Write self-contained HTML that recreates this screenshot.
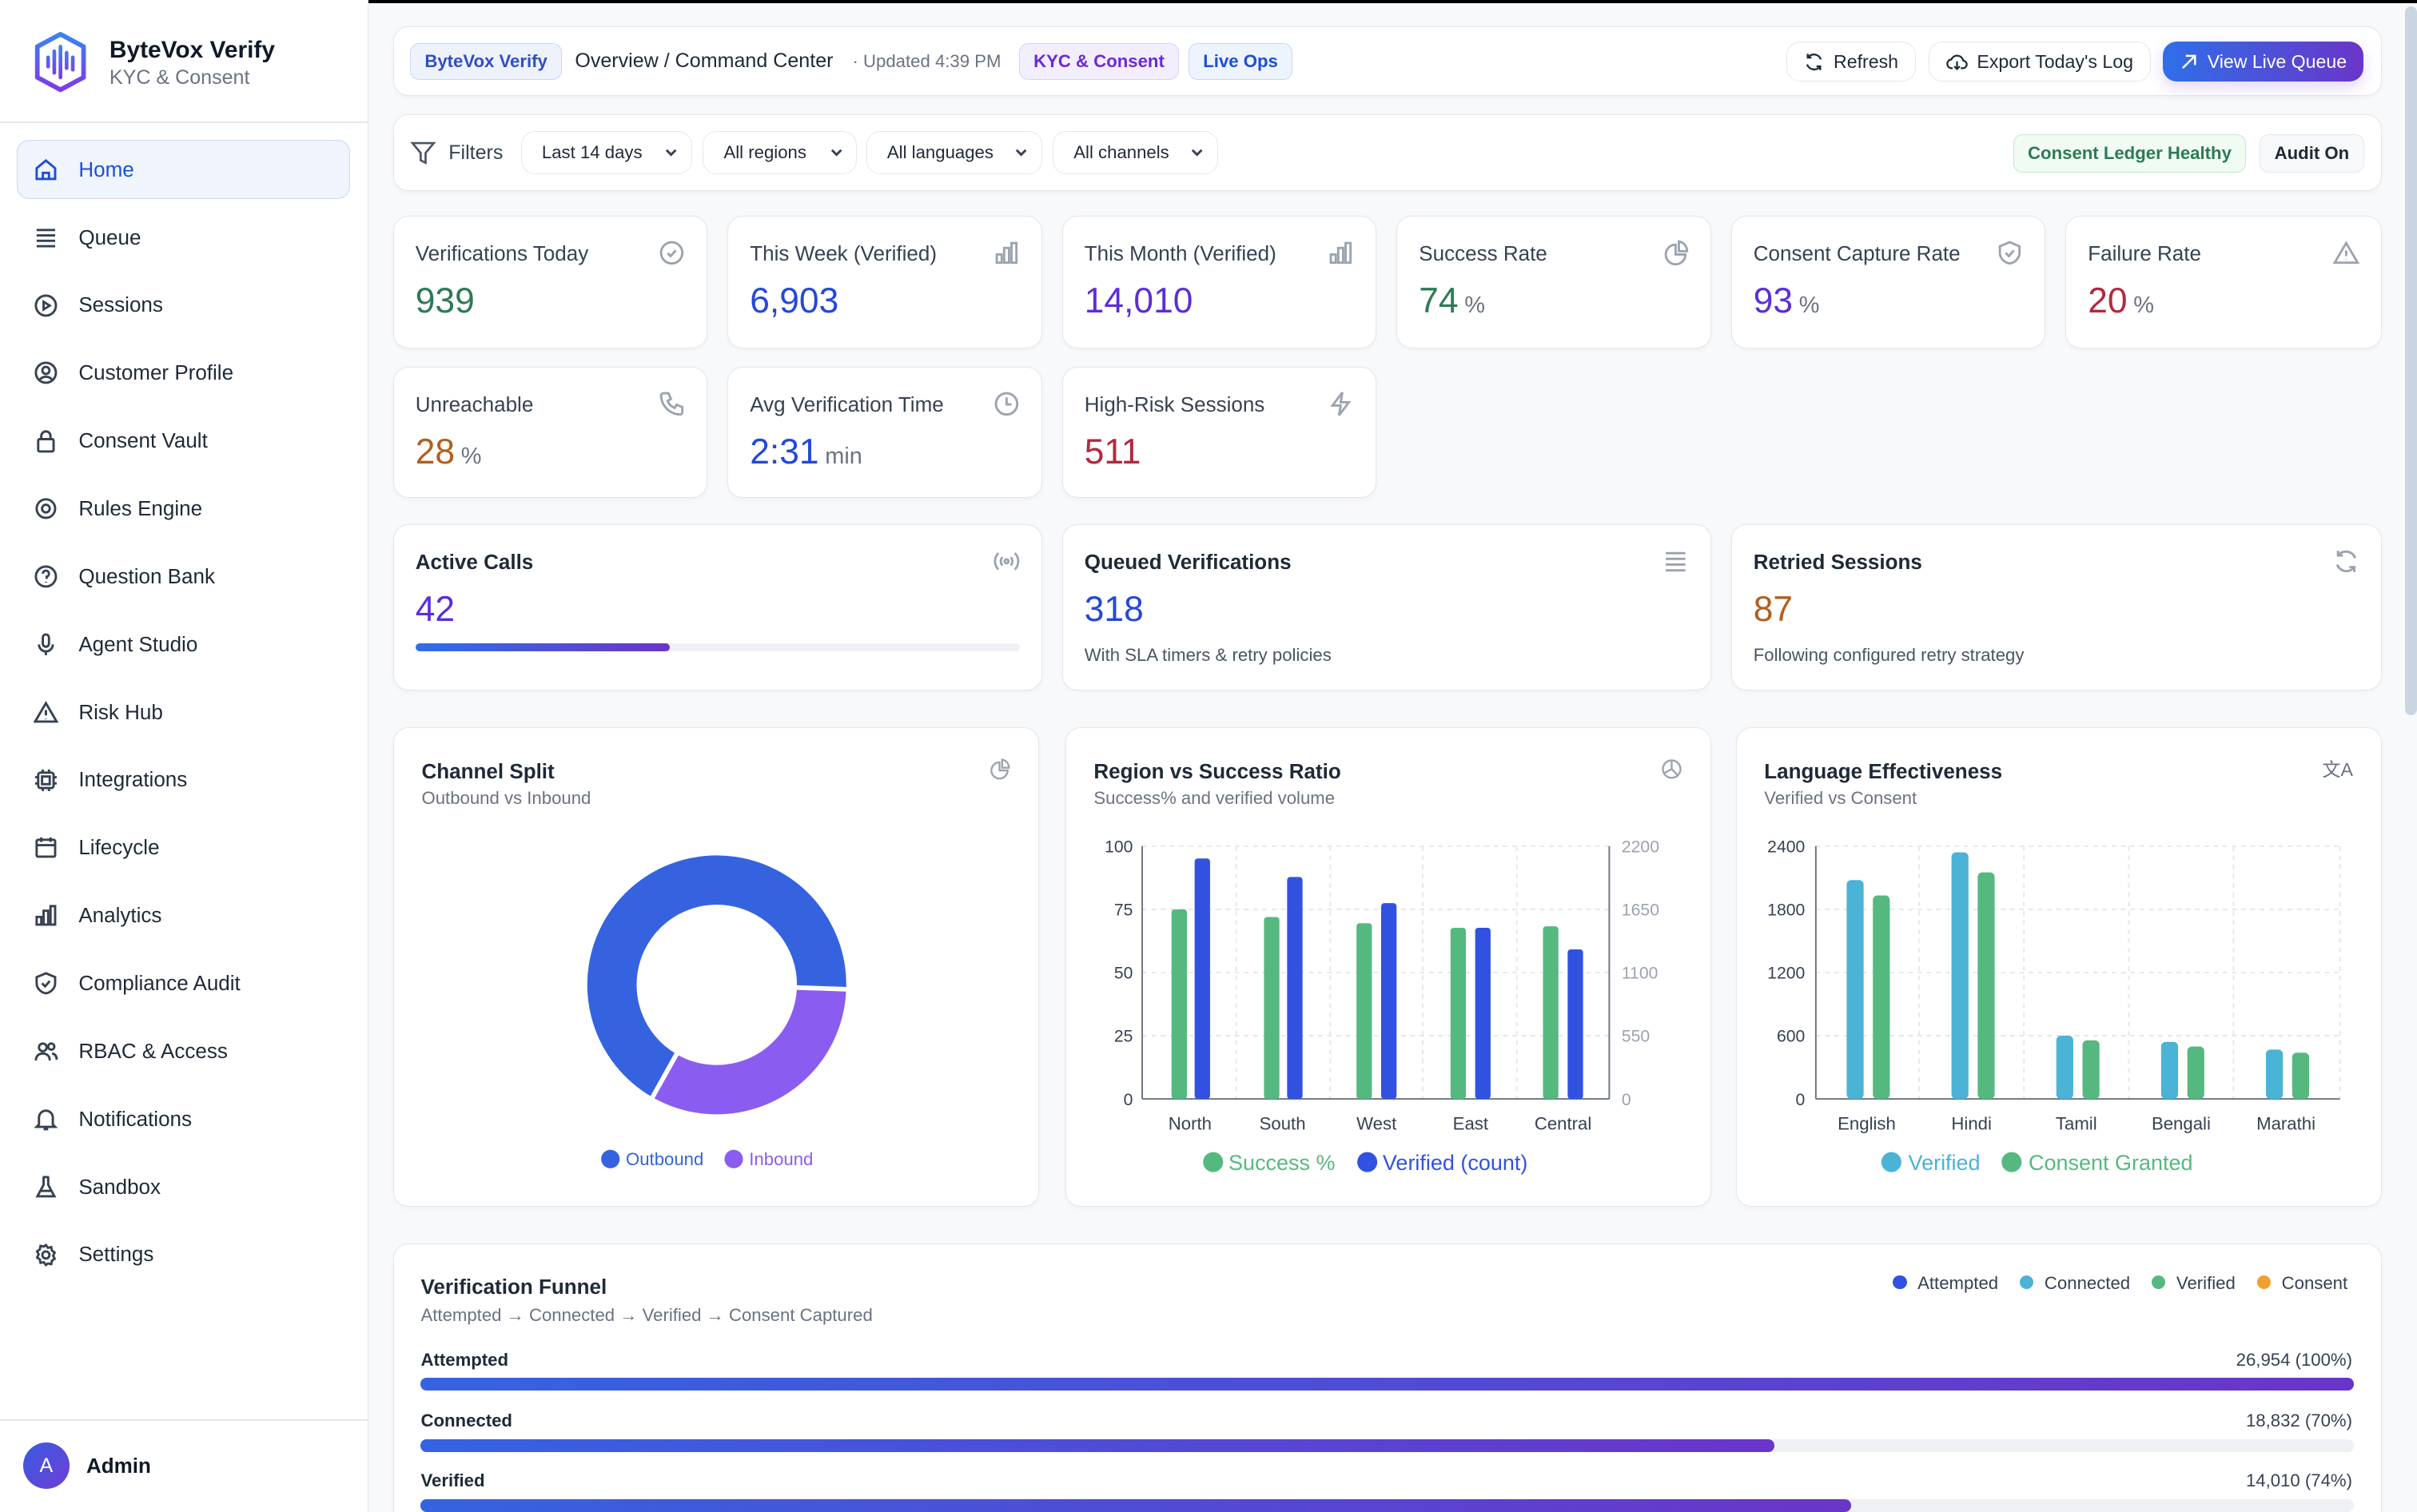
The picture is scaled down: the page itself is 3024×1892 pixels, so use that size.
<!DOCTYPE html>
<html><head><meta charset="utf-8"><style>
*{box-sizing:border-box;margin:0;padding:0}
html,body{width:3024px;height:1892px;overflow:hidden;background:#f8f9fb}
#w{zoom:1.92857;width:1568px;height:981px;position:relative;font-family:"Liberation Sans",sans-serif;color:#1f2937;overflow:hidden;background:#f8f9fb}
.a{position:absolute}
.card{position:absolute;background:#fff;border:1px solid #e5e7eb;border-radius:10px;box-shadow:0 1px 3px rgba(0,0,0,.04)}
.side{position:absolute;left:0;top:0;width:239px;height:981px;background:#fff;border-right:1px solid #e5e7eb}
.nav{position:absolute;left:22px;font-size:13.5px;color:#1f2937;display:flex;align-items:center;gap:13px}
.nav svg{width:16px;height:16px;fill:none;stroke:#374151;stroke-width:1.5}
.pill{position:absolute;height:24px;border-radius:6px;font-size:11.5px;font-weight:bold;display:flex;align-items:center;padding:0 9px}
.btn{position:absolute;height:26px;border:1px solid #e5e7eb;border-radius:9px;font-size:12px;display:flex;align-items:center;gap:6px;padding:0 11px;background:#fff}
.sel{position:absolute;top:85px;height:28px;border:1px solid #e5e7eb;border-radius:9px;font-size:11.5px;display:flex;align-items:center;padding:0 8px 0 13px;justify-content:space-between}
.sel svg{width:10px;height:10px;fill:none;stroke:#374151;stroke-width:1.5}
.kt{position:absolute;left:14px;top:16px;font-size:13.5px;color:#374151}
.kv{position:absolute;left:14px;top:42px;font-size:23px}
.kv small{font-size:15px;color:#6b7280;margin-left:4px}
.ki{position:absolute;right:14px;top:15px;width:17px;height:17px;fill:none;stroke:#9ca3af;stroke-width:1.4}
.ct{position:absolute;left:18px;top:20px;font-size:13.5px;font-weight:bold;color:#1f2937}
.cs{position:absolute;left:18px;top:39px;font-size:11.5px;color:#6b7280}
</style></head><body><div id="w">
<div class="a" style="left:0;top:0;width:1568px;height:2px;background:#000"></div>
<div class="side">
 <svg class="a" style="left:20px;top:20px" width="38" height="40" viewBox="0 0 38 40"><defs><linearGradient id="lg" x1="0" y1="0" x2="0" y2="1"><stop offset="0" stop-color="#3b82f6"/><stop offset="1" stop-color="#7c3aed"/></linearGradient></defs><path d="M19 2 L34 10 V30 L19 38 L4 30 V10 Z" fill="none" stroke="url(#lg)" stroke-width="3" stroke-linejoin="round"/><path d="M11 17v6M15 13v14M19 10v20M23 14v10M27 17v8" stroke="url(#lg)" stroke-width="2.4" stroke-linecap="round"/></svg>
 <div class="a" style="left:71px;top:24px;font-size:15.5px;font-weight:bold;color:#111827">ByteVox Verify</div>
 <div class="a" style="left:71px;top:43px;font-size:13px;color:#6b7280">KYC &amp; Consent</div>
 <div class="a" style="left:0;top:79px;width:239px;height:1px;background:#e5e7eb"></div>
 <div class="a" style="left:11px;top:91px;width:216px;height:38px;background:#eff4fd;border:1px solid #c9d9f5;border-radius:8px"></div>
 <div class="nav" style="top:102px;color:#1d4ed8"><svg viewBox="0 0 16 16" style="stroke:#1d4ed8"><path d="M2 7 8 2l6 5v7H2z M6 14v-4h4v4"/></svg>Home</div>
 <div class="nav" style="top:146px"><svg viewBox="0 0 16 16"><path d="M2 3h12M2 6.5h12M2 10h12M2 13.5h12"/></svg>Queue</div>
 <div class="nav" style="top:190px"><svg viewBox="0 0 16 16"><circle cx="8" cy="8" r="6.5"/><path d="M6.5 5.5l4 2.5-4 2.5z"/></svg>Sessions</div>
 <div class="nav" style="top:234px"><svg viewBox="0 0 16 16"><circle cx="8" cy="8" r="6.5"/><circle cx="8" cy="6.5" r="2.3"/><path d="M4 12.5c2-2.5 6-2.5 8 0"/></svg>Customer Profile</div>
 <div class="nav" style="top:278px"><svg viewBox="0 0 16 16"><rect x="3" y="7" width="10" height="8" rx="1"/><path d="M5 7V5a3 3 0 0 1 6 0v2"/></svg>Consent Vault</div>
 <div class="nav" style="top:322px"><svg viewBox="0 0 16 16"><circle cx="8" cy="8" r="2.5"/><circle cx="8" cy="8" r="6"/></svg>Rules Engine</div>
 <div class="nav" style="top:366px"><svg viewBox="0 0 16 16"><circle cx="8" cy="8" r="6.5"/><path d="M6 6.2a2 2 0 1 1 2.5 1.9V9.5M8 11.5v.5"/></svg>Question Bank</div>
 <div class="nav" style="top:410px"><svg viewBox="0 0 16 16"><rect x="6" y="1.5" width="4" height="8" rx="2"/><path d="M3.5 8a4.5 4.5 0 0 0 9 0M8 12.5V15"/></svg>Agent Studio</div>
 <div class="nav" style="top:454px"><svg viewBox="0 0 16 16"><path d="M8 2 15 14H1z M8 6.5v3.5M8 12v.3"/></svg>Risk Hub</div>
 <div class="nav" style="top:498px"><svg viewBox="0 0 16 16"><rect x="3" y="3" width="10" height="10" rx="1.5"/><rect x="5.5" y="5.5" width="5" height="5"/><path d="M1 6h2M1 10h2M13 6h2M13 10h2M6 1v2M10 1v2M6 13v2M10 13v2"/></svg>Integrations</div>
 <div class="nav" style="top:542px"><svg viewBox="0 0 16 16"><rect x="2" y="3" width="12" height="11" rx="1"/><path d="M2 6.5h12M5 1.5v3M11 1.5v3"/></svg>Lifecycle</div>
 <div class="nav" style="top:586px"><svg viewBox="0 0 16 16"><rect x="2" y="9" width="3" height="5"/><rect x="6.5" y="5" width="3" height="9"/><rect x="11" y="2" width="3" height="12"/></svg>Analytics</div>
 <div class="nav" style="top:630px"><svg viewBox="0 0 16 16"><path d="M8 1.5 14 4v4c0 3.5-3 6-6 6.5C5 14 2 11.5 2 8V4z M5.5 8l2 2 3-3.5"/></svg>Compliance Audit</div>
 <div class="nav" style="top:674px"><svg viewBox="0 0 16 16"><circle cx="6" cy="5.5" r="2.5"/><path d="M1.5 14c0-3 2-4.5 4.5-4.5s4.5 1.5 4.5 4.5"/><circle cx="11.5" cy="5" r="2"/><path d="M12 9.5c2 .3 3 1.7 3 4"/></svg>RBAC &amp; Access</div>
 <div class="nav" style="top:718px"><svg viewBox="0 0 16 16"><path d="M3.5 11.5V7a4.5 4.5 0 0 1 9 0v4.5l1.5 1.5H2z M6.5 14.5h3"/></svg>Notifications</div>
 <div class="nav" style="top:762px"><svg viewBox="0 0 16 16"><path d="M6 1.5h4M6.5 1.5v5L2.5 14h11l-4-7.5v-5M4.5 10.5h7"/></svg>Sandbox</div>
 <div class="nav" style="top:806px"><svg viewBox="0 0 16 16"><circle cx="8" cy="8" r="2.3"/><path d="M8 1.5l1.3 1.8 2.2-.4.4 2.2 1.8 1.3-1 2 1 2-1.8 1.3-.4 2.2-2.2-.4L8 14.5l-1.3-1.8-2.2.4-.4-2.2L2.3 9.6l1-2-1-2 1.8-1.3.4-2.2 2.2.4z"/></svg>Settings</div>
 <div class="a" style="left:0;top:921px;width:239px;height:1px;background:#e5e7eb"></div>
 <div class="a" style="left:15px;top:936px;width:30px;height:30px;border-radius:50%;background:linear-gradient(135deg,#3b5be0,#6d3fd6);color:#fff;font-size:13px;display:flex;align-items:center;justify-content:center">A</div>
 <div class="a" style="left:56px;top:943px;font-size:13.5px;font-weight:bold;color:#111827">Admin</div>
</div>
<div class="a" style="left:1560px;top:4px;width:8px;height:460px;background:#cbd5e1;border-radius:4px"></div>

<!-- top bar -->
<div class="card" style="left:255px;top:17px;width:1290px;height:45px"></div>
<div class="pill" style="left:266px;top:28px;background:#eef2fd;border:1px solid #c7d6f7;color:#2f4fc2">ByteVox Verify</div>
<div class="a" style="left:373px;top:32px;font-size:13px;color:#1f2937">Overview / Command Center</div>
<div class="a" style="left:553px;top:33px;font-size:11.5px;color:#6b7280">· Updated 4:39 PM</div>
<div class="pill" style="left:661px;top:28px;background:#f3eefd;border:1px solid #ddd0f7;color:#6d28d9">KYC &amp; Consent</div>
<div class="pill" style="left:771px;top:28px;background:#eef4fd;border:1px solid #c7d6f7;color:#1d4ed8">Live Ops</div>
<div class="btn" style="left:1159px;top:27px"><svg width="13" height="13" viewBox="0 0 16 16" fill="none" stroke="#1f2937" stroke-width="1.5"><path d="M13.5 6A6 6 0 0 0 3 4.5M2.5 10A6 6 0 0 0 13 11.5M3 1.5v3h3M13 14.5v-3h-3"/></svg>Refresh</div>
<div class="btn" style="left:1251px;top:27px"><svg width="14" height="13" viewBox="0 0 16 16" fill="none" stroke="#1f2937" stroke-width="1.4"><path d="M4.5 13H4a3.5 3.5 0 0 1-.5-7 5 5 0 0 1 9.5 1 3 3 0 0 1-.5 6H11M8 7.5v6M5.8 11.5 8 13.7l2.2-2.2"/></svg>Export Today's Log</div>
<div class="btn" style="left:1403px;top:27px;border:none;color:#fff;background:linear-gradient(90deg,#2f6fe8,#6a35c9);box-shadow:0 4px 10px rgba(109,60,220,.2)"><svg width="12" height="12" viewBox="0 0 12 12" fill="none" stroke="#fff" stroke-width="1.3"><path d="M2 10 10 2M4 2h6v6"/></svg>View Live Queue</div>

<!-- filters -->
<div class="card" style="left:255px;top:74px;width:1290px;height:50px"></div>
<svg class="a" style="left:266px;top:91px" width="17" height="17" viewBox="0 0 16 16" fill="none" stroke="#4b5563" stroke-width="1.3"><path d="M1.5 2h13L9.5 8v6l-3-1.5V8z"/></svg>
<div class="a" style="left:291px;top:92px;font-size:13px;color:#374151">Filters</div>
<div class="sel" style="left:338px;width:111px">Last 14 days<svg viewBox="0 0 10 10"><path d="M2 3.5 5 6.5 8 3.5"/></svg></div>
<div class="sel" style="left:456px;width:100px">All regions<svg viewBox="0 0 10 10"><path d="M2 3.5 5 6.5 8 3.5"/></svg></div>
<div class="sel" style="left:562px;width:114px">All languages<svg viewBox="0 0 10 10"><path d="M2 3.5 5 6.5 8 3.5"/></svg></div>
<div class="sel" style="left:683px;width:107px">All channels<svg viewBox="0 0 10 10"><path d="M2 3.5 5 6.5 8 3.5"/></svg></div>
<div class="pill" style="left:1306px;top:87px;height:25px;background:#effbf3;border:1px solid #bfe9cd;color:#2e7a54;font-weight:bold">Consent Ledger Healthy</div>
<div class="pill" style="left:1466px;top:87px;height:25px;background:#f8f9fb;border:1px solid #e5e7eb;color:#1f2937">Audit On</div>

<!-- KPI row 1 -->
<div class="card" style="left:255px;top:140px;width:204px;height:86px"><div class="kt">Verifications Today</div><svg class="ki" viewBox="0 0 16 16"><circle cx="8" cy="8" r="6.5"/><path d="M5.5 8.2l1.8 1.8 3.2-3.5"/></svg><div class="kv" style="color:#2e7a54">939</div></div>
<div class="card" style="left:472px;top:140px;width:204px;height:86px"><div class="kt">This Week (Verified)</div><svg class="ki" viewBox="0 0 16 16"><rect x="2" y="9" width="3" height="5"/><rect x="6.5" y="5" width="3" height="9"/><rect x="11" y="2" width="3" height="12"/></svg><div class="kv" style="color:#2448d8">6,903</div></div>
<div class="card" style="left:689px;top:140px;width:204px;height:86px"><div class="kt">This Month (Verified)</div><svg class="ki" viewBox="0 0 16 16"><rect x="2" y="9" width="3" height="5"/><rect x="6.5" y="5" width="3" height="9"/><rect x="11" y="2" width="3" height="12"/></svg><div class="kv" style="color:#5b2ed8">14,010</div></div>
<div class="card" style="left:906px;top:140px;width:204px;height:86px"><div class="kt">Success Rate</div><svg class="ki" viewBox="0 0 16 16"><path d="M8 3a6 6 0 1 0 6 6H8z M10 1v6h5a6 6 0 0 0-5-6z"/></svg><div class="kv" style="color:#2e7a54">74<small>%</small></div></div>
<div class="card" style="left:1123px;top:140px;width:204px;height:86px"><div class="kt">Consent Capture Rate</div><svg class="ki" viewBox="0 0 16 16"><path d="M8 1.5 14 4v4c0 3.5-3 6-6 6.5C5 14 2 11.5 2 8V4z M5.5 8l2 2 3-3.5"/></svg><div class="kv" style="color:#5b2ed8">93<small>%</small></div></div>
<div class="card" style="left:1340px;top:140px;width:205px;height:86px"><div class="kt">Failure Rate</div><svg class="ki" viewBox="0 0 16 16"><path d="M8 2 15 14H1z M8 6.5v3.5M8 12v.3"/></svg><div class="kv" style="color:#b3283e">20<small>%</small></div></div>
<!-- KPI row 2 -->
<div class="card" style="left:255px;top:238px;width:204px;height:85px"><div class="kt">Unreachable</div><svg class="ki" viewBox="0 0 16 16"><path d="M3 1.5h3l1.5 3.5-2 1.2a8 8 0 0 0 4.3 4.3l1.2-2 3.5 1.5v3a1.5 1.5 0 0 1-1.5 1.5A12 12 0 0 1 1.5 3 1.5 1.5 0 0 1 3 1.5z"/></svg><div class="kv" style="color:#b35e1e">28<small>%</small></div></div>
<div class="card" style="left:472px;top:238px;width:204px;height:85px"><div class="kt">Avg Verification Time</div><svg class="ki" viewBox="0 0 16 16"><circle cx="8" cy="8" r="6.5"/><path d="M8 4v4.3h3"/></svg><div class="kv" style="color:#2448d8">2:31<small style="font-size:15px">min</small></div></div>
<div class="card" style="left:689px;top:238px;width:204px;height:85px"><div class="kt">High-Risk Sessions</div><svg class="ki" viewBox="0 0 16 16"><path d="M9 1 3 9h5l-1 6 6-8H8z"/></svg><div class="kv" style="color:#b3283e">511</div></div>
<!-- row 3 -->
<div class="card" style="left:255px;top:340px;width:421px;height:108px"><div class="kt" style="font-weight:bold;color:#1f2937">Active Calls</div><svg class="ki" viewBox="0 0 16 16"><circle cx="8" cy="8" r="1.2"/><path d="M5.5 5.5a3.5 3.5 0 0 0 0 5M10.5 5.5a3.5 3.5 0 0 1 0 5M3 3a7 7 0 0 0 0 10M13 3a7 7 0 0 1 0 10"/></svg><div class="kv" style="color:#5b2ed8">42</div><div class="a" style="left:14px;top:77px;width:392px;height:5px;border-radius:3px;background:#eef0f4"><div style="width:165px;height:5px;border-radius:3px;background:linear-gradient(90deg,#2f6fe8,#6a35c9)"></div></div></div>
<div class="card" style="left:689px;top:340px;width:421px;height:108px"><div class="kt" style="font-weight:bold;color:#1f2937">Queued Verifications</div><svg class="ki" viewBox="0 0 16 16"><path d="M2 3h12M2 6.5h12M2 10h12M2 13.5h12"/></svg><div class="kv" style="color:#2448d8">318</div><div class="a" style="left:14px;top:78px;font-size:11.5px;color:#4b5563">With SLA timers &amp; retry policies</div></div>
<div class="card" style="left:1123px;top:340px;width:422px;height:108px"><div class="kt" style="font-weight:bold;color:#1f2937">Retried Sessions</div><svg class="ki" viewBox="0 0 16 16"><path d="M13.5 6A6 6 0 0 0 3 4.5M2.5 10A6 6 0 0 0 13 11.5M3 1.5v3h3M13 14.5v-3h-3"/></svg><div class="kv" style="color:#b35e1e">87</div><div class="a" style="left:14px;top:78px;font-size:11.5px;color:#4b5563">Following configured retry strategy</div></div>

<!-- charts -->
<div class="card" style="left:255px;top:472px;width:419px;height:311px"><div class="ct">Channel Split</div><div class="cs">Outbound vs Inbound</div><svg class="ki" style="right:18px;top:18px;width:14px" viewBox="0 0 16 16"><path d="M8 3a6 6 0 1 0 6 6H8z M10 1v6h5a6 6 0 0 0-5-6z"/></svg></div>
<div class="card" style="left:691px;top:472px;width:419px;height:311px"><div class="ct">Region vs Success Ratio</div><div class="cs">Success% and verified volume</div><svg class="ki" style="right:18px;top:18px;width:14px" viewBox="0 0 16 16"><circle cx="8" cy="8" r="6.5"/><path d="M8 1.5v6.5l4.5 4.5M8 8 2.5 11"/></svg></div>
<div class="card" style="left:1126px;top:472px;width:419px;height:311px"><div class="ct">Language Effectiveness</div><div class="cs">Verified vs Consent</div><div class="a" style="right:18px;top:17px;font-size:12px;color:#6b7280">文A</div></div>

<svg class="a" style="left:0;top:0" width="1568" height="981" font-family="Liberation Sans, sans-serif">
 <!-- donut -->
 <g transform="translate(465,639)">
  <circle r="68" fill="none" stroke="#3563e0" stroke-width="32" stroke-dasharray="288 200" transform="rotate(120)"/>
  <circle r="68" fill="none" stroke="#8b5cf0" stroke-width="32" stroke-dasharray="141 300" transform="rotate(2)"/>
  <line x1="50" y1="1.7" x2="88" y2="3" stroke="#fff" stroke-width="3"/>
  <line x1="-25" y1="43" x2="-44" y2="77" stroke="#fff" stroke-width="3"/>
 </g>
 <circle cx="396" cy="752" r="6" fill="#3563e0"/><text x="406" y="756" font-size="11.5" fill="#3563e0">Outbound</text>
 <circle cx="476" cy="752" r="6" fill="#8b5cf0"/><text x="486" y="756" font-size="11.5" fill="#8b5cf0">Inbound</text>
 <!-- chart2 -->
 <g stroke="#e5e7eb" stroke-dasharray="3 3">
  <line x1="741" y1="549" x2="1044" y2="549"/><line x1="741" y1="590" x2="1044" y2="590"/><line x1="741" y1="631" x2="1044" y2="631"/><line x1="741" y1="672" x2="1044" y2="672"/>
  <line x1="802" y1="549" x2="802" y2="713"/><line x1="863" y1="549" x2="863" y2="713"/><line x1="923" y1="549" x2="923" y2="713"/><line x1="984" y1="549" x2="984" y2="713"/>
 </g>
 <g stroke="#6b7280"><line x1="741" y1="549" x2="741" y2="713"/><line x1="1044" y1="549" x2="1044" y2="713"/><line x1="741" y1="713" x2="1044" y2="713"/></g>
 <g font-size="11" fill="#374151" text-anchor="end"><text x="735" y="553">100</text><text x="735" y="594">75</text><text x="735" y="635">50</text><text x="735" y="676">25</text><text x="735" y="717">0</text></g>
 <g font-size="11" fill="#9ca3af"><text x="1052" y="553">2200</text><text x="1052" y="594">1650</text><text x="1052" y="635">1100</text><text x="1052" y="676">550</text><text x="1052" y="717">0</text></g>
 <g fill="#55b97f"><rect x="760" y="590" width="10" height="123" rx="2"/><rect x="820" y="595" width="10" height="118" rx="2"/><rect x="880" y="599" width="10" height="114" rx="2"/><rect x="941" y="602" width="10" height="111" rx="2"/><rect x="1001" y="601" width="10" height="112" rx="2"/></g>
 <g fill="#3152e0"><rect x="775" y="557" width="10" height="156" rx="2"/><rect x="835" y="569" width="10" height="144" rx="2"/><rect x="896" y="586" width="10" height="127" rx="2"/><rect x="957" y="602" width="10" height="111" rx="2"/><rect x="1017" y="616" width="10" height="97" rx="2"/></g>
 <g font-size="11.5" fill="#374151" text-anchor="middle"><text x="772" y="733">North</text><text x="832" y="733">South</text><text x="893" y="733">West</text><text x="954" y="733">East</text><text x="1014" y="733">Central</text></g>
 <circle cx="787" cy="754" r="6.5" fill="#55b97f"/><text x="797" y="759" font-size="14" fill="#55b97f">Success %</text>
 <circle cx="887" cy="754" r="6.5" fill="#3152e0"/><text x="897" y="759" font-size="14" fill="#3152e0">Verified (count)</text>
 <!-- chart3 -->
 <g stroke="#e5e7eb" stroke-dasharray="3 3">
  <line x1="1178" y1="549" x2="1518" y2="549"/><line x1="1178" y1="590" x2="1518" y2="590"/><line x1="1178" y1="631" x2="1518" y2="631"/><line x1="1178" y1="672" x2="1518" y2="672"/>
  <line x1="1245" y1="549" x2="1245" y2="713"/><line x1="1313" y1="549" x2="1313" y2="713"/><line x1="1381" y1="549" x2="1381" y2="713"/><line x1="1449" y1="549" x2="1449" y2="713"/><line x1="1518" y1="549" x2="1518" y2="713"/>
 </g>
 <g stroke="#6b7280"><line x1="1178" y1="549" x2="1178" y2="713"/><line x1="1178" y1="713" x2="1518" y2="713"/></g>
 <g font-size="11" fill="#374151" text-anchor="end"><text x="1171" y="553">2400</text><text x="1171" y="594">1800</text><text x="1171" y="635">1200</text><text x="1171" y="676">600</text><text x="1171" y="717">0</text></g>
 <g fill="#4ab3d6"><rect x="1198" y="571" width="11" height="142" rx="3"/><rect x="1266" y="553" width="11" height="160" rx="3"/><rect x="1334" y="672" width="11" height="41" rx="3"/><rect x="1402" y="676" width="11" height="37" rx="3"/><rect x="1470" y="681" width="11" height="32" rx="3"/></g>
 <g fill="#55b97f"><rect x="1215" y="581" width="11" height="132" rx="3"/><rect x="1283" y="566" width="11" height="147" rx="3"/><rect x="1351" y="675" width="11" height="38" rx="3"/><rect x="1419" y="679" width="11" height="34" rx="3"/><rect x="1487" y="683" width="11" height="30" rx="3"/></g>
 <g font-size="11.5" fill="#374151" text-anchor="middle"><text x="1211" y="733">English</text><text x="1279" y="733">Hindi</text><text x="1347" y="733">Tamil</text><text x="1415" y="733">Bengali</text><text x="1483" y="733">Marathi</text></g>
 <circle cx="1227" cy="754" r="6.5" fill="#4ab3d6"/><text x="1238" y="759" font-size="14" fill="#4ab3d6">Verified</text>
 <circle cx="1305" cy="754" r="6.5" fill="#55b97f"/><text x="1316" y="759" font-size="14" fill="#55b97f">Consent Granted</text>
</svg>

<!-- funnel -->
<div class="card" style="left:255px;top:807px;width:1290px;height:200px"></div>
<div class="a" style="left:273px;top:827px;font-size:13.5px;font-weight:bold">Verification Funnel</div>
<div class="a" style="left:273px;top:847px;font-size:11.5px;color:#6b7280">Attempted → Connected → Verified → Consent Captured</div>
<div class="a" style="left:1228px;top:826px;font-size:11.5px;color:#374151;display:flex;gap:14px;align-items:center">
 <span><b style="display:inline-block;width:9px;height:9px;border-radius:50%;background:#3152e0;margin-right:7px"></b>Attempted</span>
 <span><b style="display:inline-block;width:9px;height:9px;border-radius:50%;background:#4ab3d6;margin-right:7px"></b>Connected</span>
 <span><b style="display:inline-block;width:9px;height:9px;border-radius:50%;background:#55b97f;margin-right:7px"></b>Verified</span>
 <span><b style="display:inline-block;width:9px;height:9px;border-radius:50%;background:#f0a030;margin-right:7px"></b>Consent</span>
</div>
<div class="a" style="left:273px;top:876px;font-size:11.5px;font-weight:bold">Attempted</div><div class="a" style="right:42px;top:876px;font-size:11.5px;color:#374151">26,954 (100%)</div>
<div class="a" style="left:273px;top:894px;width:1254px;height:8px;border-radius:4px;background:linear-gradient(90deg,#3563e0,#6a35c9)"></div>
<div class="a" style="left:273px;top:915px;font-size:11.5px;font-weight:bold">Connected</div><div class="a" style="right:42px;top:915px;font-size:11.5px;color:#374151">18,832 (70%)</div>
<div class="a" style="left:273px;top:934px;width:1254px;height:8px;border-radius:4px;background:#eef0f4"><div style="width:878px;height:8px;border-radius:4px;background:linear-gradient(90deg,#3563e0,#6a35c9)"></div></div>
<div class="a" style="left:273px;top:954px;font-size:11.5px;font-weight:bold">Verified</div><div class="a" style="right:42px;top:954px;font-size:11.5px;color:#374151">14,010 (74%)</div>
<div class="a" style="left:273px;top:973px;width:1254px;height:8px;border-radius:4px;background:#eef0f4"><div style="width:928px;height:8px;border-radius:4px;background:linear-gradient(90deg,#3563e0,#6a35c9)"></div></div>
</div></body></html>
